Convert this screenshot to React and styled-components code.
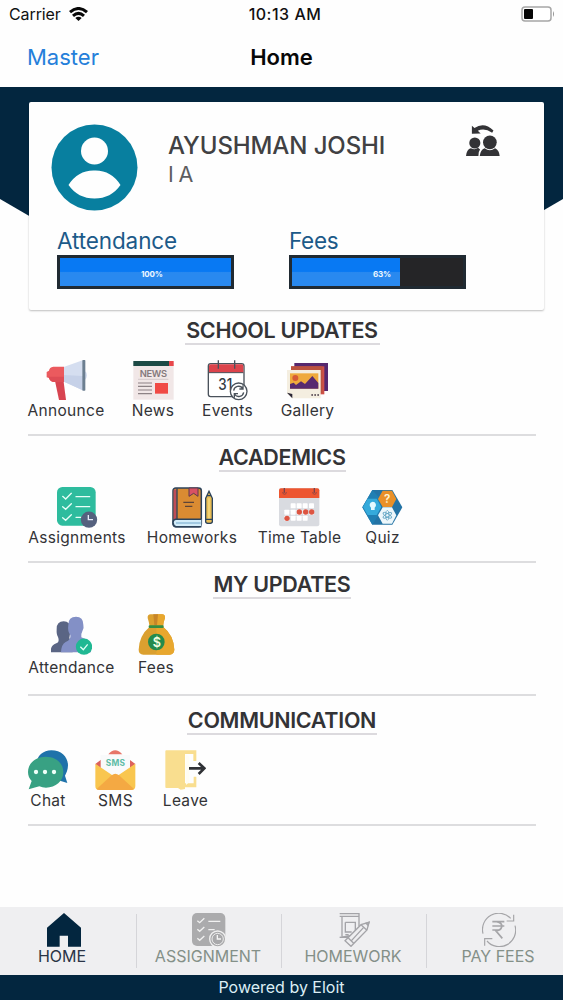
import styled, { createGlobalStyle } from "styled-components";

const GlobalStyle = createGlobalStyle`
	* {
		box-sizing: border-box;
	}
	body {
		margin: 0;
		background-color: #fefefe;
		font-family: Inter, "Liberation Sans", sans-serif;
		color: #333336;
	}
`;

const AnnounceIcon = () => (
	<Icon viewBox="0 0 123 123">
		<path d="M51 22 L110 1 V91 L51 64Z" fill="#d5def0" />
		<path d="M51 45 L110 48 V91 L51 64Z" fill="#c6d1e8" />
		<path d="M117 34 q6 3 6 12 t-6 13z" fill="#d5def0" />
		<rect x="109" y="0" width="9" height="92" rx="2" fill="#6c7f91" />
		<path d="M26 58 H52 L60 120 H39Z" fill="#d84450" />
		<path d="M54 20 H22 Q10 21 9 32 L2 36 V52 L9 54 Q11 65 24 66 H54Z" fill="#eb5a5e" />
		<path d="M54 50 H8 Q11 65 24 66 H54Z" fill="#de4c55" />
	</Icon>
);

const NewsIcon = () => (
	<Icon viewBox="0 0 123 123">
		<rect x="1" y="8" width="121" height="111" fill="#f1e7e7" />
		<rect x="1" y="3" width="107" height="15" fill="#1c4a45" />
		<rect x="108" y="3" width="14" height="15" fill="#e8474b" />
		<text x="20" y="50" fontSize="28" fontWeight="600" textLength="82" fill="#85797c">
			NEWS
		</text>
		<path d="M15 58 H106" stroke="#c4b9bb" strokeWidth="2" />
		<path d="M15 69 H57 M15 79 H57 M15 90 H57 M15 101 H57" stroke="#8d8285" strokeWidth="3.5" />
		<rect x="66" y="69" width="39" height="32" fill="#f04a45" />
	</Icon>
);

const EventsIcon = () => (
	<Icon viewBox="0 0 123 123">
		<rect x="4" y="11" width="107" height="99" rx="7" fill="#fff" stroke="#4a525b" strokeWidth="4" />
		<path d="M6 38 V18 Q6 13 11 13 H104 Q109 13 109 18 V38Z" fill="#dc444c" />
		<path d="M6 38 H109" stroke="#4a525b" strokeWidth="3" />
		<path d="M34 1 V26 M83 1 V26" stroke="#4a525b" strokeWidth="4" />
		<text x="34" y="89" fontSize="47" fontWeight="500" textLength="42" lengthAdjust="spacingAndGlyphs" fill="#343c44">
			31
		</text>
		<circle cx="95" cy="94" r="25" fill="#fff" stroke="#4a525b" strokeWidth="4" />
		<path
			d="M80 92 A15 15 0 0 1 107 85 M110 97 A15 15 0 0 1 83 103 M108 76 V87 H97 M82 113 V101 H93"
			fill="none"
			stroke="#4a525b"
			strokeWidth="4"
		/>
	</Icon>
);

const GalleryIcon = () => (
	<Icon viewBox="0 0 123 123">
		<rect x="22" y="9" width="101" height="84" fill="#56286e" />
		<rect x="12" y="19" width="100" height="84" fill="#cf5149" />
		<rect x="12" y="19" width="94" height="80" fill="#bb523e" />
		<path d="M0 30 H101 V115 H15 L0 100Z" fill="#f4eee0" />
		<rect x="9" y="40" width="85" height="46" fill="#efaa3d" />
		<circle cx="25" cy="54" r="9" fill="#d65b35" />
		<path d="M9 86 V72 L20 68 L27 75 L42 64 L54 72 L76 48 L94 69 V86Z" fill="#572a70" />
		<path d="M0 98 L16 102 V115Z" fill="#2b2635" />
		<path d="M73 105 H97" stroke="#473a45" strokeWidth="5" strokeDasharray="5 4" />
	</Icon>
);

const AssignmentsIcon = () => (
	<Icon viewBox="0 0 123 123">
		<rect x="0" y="0" width="116" height="116" rx="16" fill="#2ebc9e" />
		<path
			d="M17 28 L26 36 L43 19 M17 59 L26 67 L43 50 M17 92 L26 100 L43 83 M57 29 H98 M57 59 H98 M57 91 H73"
			fill="none"
			stroke="#e8fff8"
			strokeWidth="4"
			strokeLinecap="round"
		/>
		<circle cx="96" cy="98" r="24.500" fill="#55617e" />
		<path d="M94 84 V98 H108" fill="none" stroke="#e8ecfa" strokeWidth="4" />
	</Icon>
);

const HomeworksIcon = () => (
	<Icon viewBox="0 0 123 123">
		<rect x="3" y="3" width="85" height="116" rx="8" fill="#da8b32" stroke="#2c435b" strokeWidth="4.500" />
		<path d="M5 8 H14 V98 H5Z" fill="#bf4c58" />
		<path d="M15 4 V98" stroke="#2c435b" strokeWidth="4" />
		<path d="M88 97 H11 Q3 98 3 107 Q4 118 12 119 H88" fill="#d3edfa" stroke="#2c435b" strokeWidth="4.500" />
		<path d="M12 108 H86" stroke="#71a6ca" strokeWidth="3" />
		<path d="M51 3 H78 V28 L65 19 L51 28Z" fill="#d95264" stroke="#5d3b4c" strokeWidth="3" />
		<path d="M34 46 H66 M39 58 H61" stroke="#5d4438" strokeWidth="4" />
		<path d="M101 34 L111 13 L121 34 V104 Q121 109 111 109 Q101 109 101 104Z" fill="#e8bd55" stroke="#2c435b" strokeWidth="4" />
		<path d="M111 34 V96" stroke="#f7db83" strokeWidth="4" />
		<path d="M102 97 H120 M105 26 H117" stroke="#2c435b" strokeWidth="4" />
	</Icon>
);

const tableCells = [
	[35, 49], [53, 49], [71, 49], [90, 49],
	[16, 68], [35, 68], [53, 68], [71, 68], [90, 68],
	[16, 86], [35, 86], [53, 86], [71, 86],
];
const tableMarks = [[61, 75], [80, 75], [98, 75], [24, 94]];

const TimeTableIcon = () => (
	<Icon viewBox="0 0 123 123">
		<rect x="0" y="4" width="121" height="114" rx="6" fill="#d9dbe0" />
		<path d="M0 33 V10 Q0 4 6 4 H115 Q121 4 121 10 V33Z" fill="#ed5530" />
		<path d="M16 3 V17 M106 3 V17" fill="none" stroke="#79424a" strokeWidth="4" />
		<path d="M11 15 Q11 22 17 22 Q22 22 22 15 M101 15 Q101 22 107 22 Q112 22 112 15" fill="none" stroke="#9b4740" strokeWidth="3" />
		{tableCells.map(([x, y]) => (
			<rect key={`${x}-${y}`} x={x} y={y} width="15" height="15" rx="2" fill="#fff" />
		))}
		{tableMarks.map(([cx, cy]) => (
			<circle key={`${cx}-${cy}`} cx={cx} cy={cy} r="8" fill="#dd5542" />
		))}
	</Icon>
);

const QuizIcon = () => (
	<Icon viewBox="0 0 123 123">
		<path d="M1 61 L31 9 H91 L121 61 L91 113 H31Z" fill="#2373a5" />
		<path d="M1 61 L31 9 L50 30 L57 60 L47 88 L31 113Z" fill="#207fb3" />
		<path d="M3 60 L17 35 H44 L58 60 L44 84 H17Z" fill="#35aadb" />
		<path d="M48 36 L62 11 H90 L103 36 L90 60 H62Z" fill="#e99028" />
		<path d="M48 85 L62 61 H90 L103 85 L90 110 H62Z" fill="#edf7fb" />
		<path d="M32 44 a10 10 0 0 1 6 18 v7 h-11 v-7 a10 10 0 0 1 5 -18z" fill="#e4f9ff" />
		<text x="66" y="48" fontSize="35" fontWeight="600" fill="#fff4d2">
			?
		</text>
		<g fill="none" stroke="#64a6c4" strokeWidth="2.500">
			<ellipse cx="76" cy="85" rx="5" ry="15" />
			<ellipse cx="76" cy="85" rx="5" ry="15" transform="rotate(60 76 85)" />
			<ellipse cx="76" cy="85" rx="5" ry="15" transform="rotate(120 76 85)" />
		</g>
	</Icon>
);

const AttendanceIcon = () => (
	<Icon viewBox="0 0 123 123">
		<path
			d="M17 45 Q17 22 38 22 Q58 22 59 45 L56 66 Q52 78 65 82 V115 H0 V104 Q2 94 16 88 Q27 84 21 69 Q16 62 17 45Z"
			fill="#5a6584"
		/>
		<path
			d="M52 32 Q52 8 75 8 Q97 8 97 32 Q100 44 94 52 Q89 61 91 70 Q118 77 120 115 H30 Q31 91 44 84 Q61 77 58 63 Q49 52 52 32Z"
			fill="#8390c6"
		/>
		<circle cx="99" cy="98" r="24.500" fill="#20b893" />
		<path d="M88 98 L97 107 L110 91" fill="none" stroke="#e0fff6" strokeWidth="4" />
	</Icon>
);

const MoneyIcon = () => (
	<Icon viewBox="0 0 123 123">
		<path
			d="M41 38 Q39 24 35 12 Q34 1 44 1 H78 Q88 1 87 12 Q82 24 81 38 Q113 63 115 107 Q114 121 101 122 H22 Q8 121 8 107 Q9 65 41 38Z"
			fill="#dba02f"
		/>
		<path d="M61 1 H78 Q88 1 87 12 Q82 24 81 38 Q113 63 115 107 Q114 121 101 122 H61Z" fill="#e8a72e" />
		<path d="M52 1 H66 L63 34 H55Z" fill="#c78528" />
		<rect x="38" y="34" width="45" height="8" rx="3" fill="#368e43" />
		<circle cx="61" cy="84" r="25" fill="#248b4c" />
		<text x="50" y="98" fontSize="38" fontWeight="600" textLength="22" fill="#f2ffe0">
			$
		</text>
	</Icon>
);

const ChatIcon = () => (
	<Icon viewBox="0 0 123 123">
		<path
			d="M70 1 C101 1 120 22 120 46 C120 60 114 71 111 77 L118 99 L96 92 C58 104 25 78 25 44 C25 19 45 1 70 1Z"
			fill="#1f72aa"
		/>
		<path
			d="M53 20 C84 20 106 39 106 67 C106 94 83 113 54 113 Q43 113 34 109 L2 118 L11 93 C4 86 0 77 0 66 C0 39 24 20 53 20Z"
			fill="#38a183"
		/>
		<g fill="#f0fff9">
			<circle cx="24" cy="66" r="6.500" />
			<circle cx="51" cy="66" r="6.500" />
			<circle cx="78" cy="66" r="6.500" />
		</g>
	</Icon>
);

const SmsIcon = () => (
	<Icon viewBox="0 0 123 123">
		<path d="M40 13 Q60 -12 82 13Z" fill="#e77569" />
		<path d="M1 42 L18 29 V56Z M121 42 L104 29 V56Z" fill="#dc625c" />
		<path d="M17 15 H105 V80 H17Z" fill="#f9fafb" />
		<text x="32" y="48" fontSize="25" fontWeight="700" textLength="58" fill="#5ebca6">
			SMS
		</text>
		<path d="M1 41 L61 82 L121 41 V108 Q121 120 109 120 H13 Q1 120 1 108Z" fill="#f9c64f" />
		<path d="M5 117 L50 76 Q61 67 72 76 L117 117 Q114 120 108 120 H14 Q7 120 5 117Z" fill="#f4a943" />
	</Icon>
);

const LeaveIcon = () => (
	<Icon viewBox="0 0 123 123">
		<path d="M4 1 H94 V33 H85 V12 H60 V100 H86 V80 H94 V112 H60 V117 L47 119 L39 114 H4Q1 114 1 111 V4Q1 1 4 1Z" fill="#f9de8f" />
		<path d="M61 13 L73 20 V96 L63 105Z" fill="#fffdf3" />
		<path d="M72 55 H116 M101 39 L118 55 L101 72" fill="none" stroke="#303236" strokeWidth="8" />
	</Icon>
);

const AvatarIcon = () => (
	<Avatar viewBox="0 0 87 87">
		<circle cx="43.500" cy="43.500" r="43" fill="#087f9f" />
		<circle cx="43.500" cy="27" r="13.500" fill="#fefefe" />
		<path d="M17.500 61 Q27 46 43.500 46.500 Q60 46 69.500 61 Q60 74.500 43.500 74.500 Q27 74.500 17.500 61Z" fill="#fefefe" />
	</Avatar>
);

const SwitchUserIcon = () => (
	<SwitchUser viewBox="0 0 104 96" fill="#333336">
		<path d="M18 1 L26 8 Q56 -11 84 16 L80 23 Q56 6 36 17 L45 25 L18 26Z" />
		<circle cx="27" cy="54" r="17" />
		<path d="M0 94 Q2 73 15 70 Q27 77 37 69 L43 74 Q37 81 38 94Z" />
		<circle cx="73" cy="52" r="21" />
		<path d="M42 94 Q44 75 57 70 Q73 82 89 70 Q102 76 103 94Z" />
	</SwitchUser>
);

const HomeTabIcon = () => (
	<TabIcon viewBox="0 0 102 102" fill="#03263f">
		<path d="M51 0 L102 44 V101 H63 V68 H38 V101 H0 V44Z" />
	</TabIcon>
);

const AssignmentTabIcon = () => (
	<TabIcon viewBox="0 0 102 102" fill="none">
		<rect width="100" height="99" rx="15" fill="#ababad" />
		<path
			d="M16 23 L23 29 L37 16 M16 49 L23 55 L37 42 M16 76 L23 82 L37 69 M49 25 H85 M49 50 H68"
			stroke="#f1f1f1"
			strokeWidth="4"
		/>
		<circle cx="77" cy="78" r="24" fill="#a8a8aa" stroke="#f0f0f0" strokeWidth="4" />
		<circle cx="77" cy="78" r="17" stroke="#ececec" strokeWidth="3" />
		<path d="M76 66 V78 H87" stroke="#f5f5f5" strokeWidth="4" />
	</TabIcon>
);

const HomeworkTabIcon = () => (
	<TabIcon viewBox="0 0 102 102" fill="none" stroke="#a4a4a8" strokeWidth="4">
		<path d="M8 2 H66 V39 M66 64 V73 H8Z M8 10 H66 M15 12 V70 M25 28 H55 V52 M25 28 V57 H44 M25 65 H35" />
		<path d="M96 28 L90 51 L42 100 L24 83 L72 35Z M72 35 L89 51" fill="#efeff1" />
		<path d="M96 28 L87 31 L93 37Z M34 75 L50 91 M80 43 L44 82" />
	</TabIcon>
);

const PayTabIcon = () => (
	<TabIcon viewBox="0 0 102 102" fill="none" stroke="#a5a5a8" strokeWidth="3.500">
		<path d="M3 62 A49 49 0 0 1 86 16 M99 38 A49 49 0 0 1 15 84 M95 5 V24 H74 M8 98 V77 H31" />
		<path d="M31 26 H67 M31 39 H67 M31 51 H53 M44 26 Q62 30 59 42 Q56 53 41 53 L61 76" strokeWidth="5" />
	</TabIcon>
);

const sections = [
	{
		title: "SCHOOL UPDATES", height: 125, top: 6, gap: 28, titleWidth: 195,
		items: [
			{ label: "Announce", width: 76, icon: <AnnounceIcon /> },
			{ label: "News", width: 42, icon: <NewsIcon /> },
			{ label: "Events", width: 51, icon: <EventsIcon /> },
			{ label: "Gallery", width: 53, icon: <GalleryIcon /> },
		],
	},
	{
		title: "ACADEMICS", height: 127, top: 8, gap: 21, titleWidth: 127,
		items: [
			{ label: "Assignments", width: 98, icon: <AssignmentsIcon /> },
			{ label: "Homeworks", width: 90, icon: <HomeworksIcon /> },
			{ label: "Time Table", width: 83, icon: <TimeTableIcon /> },
			{ label: "Quiz", width: 41, icon: <QuizIcon /> },
		],
	},
	{
		title: "MY UPDATES", height: 133, top: 8, gap: 22, titleWidth: 138, labelTop: 3,
		items: [
			{ label: "Attendance", width: 87, icon: <AttendanceIcon /> },
			{ label: "Fees", width: 38, icon: <MoneyIcon /> },
		],
	},
	{
		title: "COMMUNICATION", height: 130, top: 11, gap: 26, titleWidth: 190,
		items: [
			{ label: "Chat", width: 40, icon: <ChatIcon /> },
			{ label: "SMS", width: 43, icon: <SmsIcon /> },
			{ label: "Leave", width: 45, icon: <LeaveIcon /> },
		],
	},
];

const tabs = [
	{ label: "HOME", icon: <HomeTabIcon />, active: true },
	{ label: "ASSIGNMENT", icon: <AssignmentTabIcon /> },
	{ label: "HOMEWORK", icon: <HomeworkTabIcon /> },
	{ label: "PAY FEES", icon: <PayTabIcon /> },
];

const App = () => {
	return (
		<Page>
			<GlobalStyle />
			<StatusBar>
				<Carrier>
					Carrier
					<Wifi viewBox="0 0 19 14" fill="none" stroke="#080808" strokeWidth="3">
						<path d="M1 5.200 Q9.500 -2.200 18 5.200 M4 8.800 Q9.500 4 15 8.800" />
						<path d="M6.300 11 Q9.500 8.300 12.700 11 L9.500 14Z" fill="#080808" stroke="none" />
					</Wifi>
				</Carrier>
				<Clock>10:13 AM</Clock>
				<Battery viewBox="0 0 34 16">
					<rect x="1" y="1" width="29" height="14" rx="3" fill="#fff" stroke="#a7a7a7" strokeWidth="1.500" />
					<rect x="3" y="3" width="9" height="10" rx="1" fill="#050505" />
					<path d="M32 5 Q34 8 32 11Z" fill="#929292" />
				</Battery>
			</StatusBar>
			<NavBar>
				<BackLink>Master</BackLink>
				<NavTitle>Home</NavTitle>
			</NavBar>
			<Hero>
				<Card>
					<Profile>
						<AvatarIcon />
						<NameBox>
							<Name>AYUSHMAN JOSHI</Name>
							<ClassName>I A</ClassName>
						</NameBox>
						<SwitchUserIcon />
					</Profile>
					<Meters>
						<Meter>
							<MeterLabel $spacing="-0.1px">Attendance</MeterLabel>
							<Track>
								<Fill style={{ width: "100%" }}>
									<Percent>100%</Percent>
								</Fill>
							</Track>
						</Meter>
						<Meter>
							<MeterLabel $spacing="-0.3px">Fees</MeterLabel>
							<Track>
								<Fill style={{ width: "63%" }}>
									<Percent>63%</Percent>
								</Fill>
							</Track>
						</Meter>
					</Meters>
				</Card>
			</Hero>
			{sections.map((section) => (
				<Section key={section.title} $height={section.height} $top={section.top}>
					<SectionTitle $width={section.titleWidth}>{section.title}</SectionTitle>
					<Tiles $gap={section.gap}>
						{section.items.map((item) => (
							<Tile key={item.label} $width={item.width}>
								{item.icon}
								<TileLabel $top={section.labelTop}>{item.label}</TileLabel>
							</Tile>
						))}
					</Tiles>
				</Section>
			))}
			<TabBar>
				{tabs.map((tab) => (
					<Tab key={tab.label} $active={tab.active}>
						{tab.icon}
						<TabLabel $active={tab.active}>{tab.label}</TabLabel>
					</Tab>
				))}
			</TabBar>
			<Footer>Powered by Eloit</Footer>
		</Page>
	);
};

export default App;

const Page = styled.div`
	display: flex;
	flex-direction: column;
	width: 563px;
	height: 1000px;
	overflow: hidden;
`;

const StatusBar = styled.header`
	display: grid;
	grid-template-columns: 1fr auto 1fr;
	align-items: center;
	height: 28px;
	padding: 0 8px 0 9px;
	color: #111;
`;

const Carrier = styled.div`
	display: flex;
	align-items: center;
	gap: 8px;
	font-size: 16px;
	letter-spacing: -0.1px;
`;

const Wifi = styled.svg`
	width: 19px;
	height: 14px;
`;

const Clock = styled.div`
	margin-left: 6px;
	font-size: 16px;
	font-weight: 500;
	letter-spacing: 0.5px;
	white-space: nowrap;
`;

const Battery = styled.svg`
	justify-self: end;
	width: 34px;
	height: 16px;
`;

const NavBar = styled.nav`
	display: grid;
	grid-template-columns: 1fr auto 1fr;
	align-items: center;
	height: 59px;
	padding: 0 28px 2px;
	font-size: 22px;
`;

const BackLink = styled.span`
	margin-left: -1px;
	color: #257fda;
`;

const NavTitle = styled.h1`
	margin: 0;
	color: #080808;
	font-size: 22px;
	font-weight: 600;
`;

const Hero = styled.section`
	position: relative;
	flex-shrink: 0;
	height: 224px;
	padding: 15px 19px 0 29px;

	&::before {
		content: "";
		position: absolute;
		z-index: -1;
		inset: 0;
		background-color: #03263f;
		clip-path: polygon(0 0, 100% 0, 100% 112px, 403px 205px, 160px 205px, 0 112px);
	}
`;

const Card = styled.article`
	height: 208px;
	padding: 22px 28px 0 22px;
	background-color: #fefefe;
	border-radius: 2px;
	box-shadow: 0 1px 2px rgba(0, 0, 0, 0.25);
`;

const Profile = styled.div`
	display: flex;
	align-items: flex-start;
	height: 103px;
`;

const Avatar = styled.svg`
	width: 87px;
	height: 87px;
`;

const NameBox = styled.div`
	width: 298px;
	margin-left: 30px;
	padding-top: 7px;
`;

const Name = styled.div`
	color: #414143;
	font-size: 24px;
	line-height: 30px;
	font-weight: 500;
	letter-spacing: -0.1px;
	white-space: nowrap;
`;

const ClassName = styled.div`
	color: #5d5d5f;
	font-size: 21.5px;
	line-height: 26px;
	letter-spacing: -0.6px;
`;

const SwitchUser = styled.svg`
	flex-shrink: 0;
	width: 34px;
	height: 32px;
	margin-top: 1px;
`;

const Meters = styled.div`
	display: flex;
	gap: 55px;
	padding-left: 6px;
`;

const Meter = styled.div`
	width: 177px;
`;

const MeterLabel = styled.div`
	height: 28px;
	color: #1c5a89;
	font-size: 22.5px;
	line-height: 28px;
	letter-spacing: ${({ $spacing }) => $spacing};
`;

const Track = styled.div`
	height: 34px;
	border: 3px solid #202a32;
	background-color: #252527;
`;

const Fill = styled.div`
	display: flex;
	align-items: center;
	height: 28px;
	background: linear-gradient(#0879f3 0 48%, #2989ef 52%);
`;

const Percent = styled.span`
	padding-left: 81px;
	padding-top: 3px;
	color: #eef8ff;
	font-size: 8px;
	line-height: 10px;
	font-weight: 700;
	letter-spacing: -0.2px;
`;

const Section = styled.section`
	flex-shrink: 0;
	height: ${({ $height }) => $height}px;
	margin: 0 27px 0 28px;
	padding-top: ${({ $top }) => $top}px;
	border-bottom: 2px solid #dddddf;
`;

const SectionTitle = styled.h2`
	display: flex;
	justify-content: center;
	width: ${({ $width }) => $width}px;
	height: 28px;
	margin: 0 auto 15px;
	border-bottom: 2px solid #dcdade;
	font-size: 21.5px;
	line-height: 26px;
	font-weight: 600;
	letter-spacing: -0.3px;
	white-space: nowrap;
`;

const Tiles = styled.div`
	display: flex;
	gap: ${({ $gap }) => $gap}px;
`;

const Tile = styled.div`
	display: flex;
	flex-direction: column;
	align-items: center;
	width: ${({ $width }) => $width}px;
`;

const Icon = styled.svg`
	flex-shrink: 0;
	width: 41px;
	height: 41px;
	font-family: Inter, sans-serif;
`;

const TileLabel = styled.span`
	margin-top: ${({ $top }) => $top || 0}px;
	font-size: 15.5px;
	line-height: 20px;
	letter-spacing: 0.3px;
	white-space: nowrap;
`;

const TabBar = styled.nav`
	display: grid;
	grid-template-columns: repeat(4, 145px);
	flex-shrink: 0;
	height: 68px;
	margin: auto -9px 0 -8px;
	padding-top: 7px;
	background-color: #efeff1;
`;

const Tab = styled.div`
	display: flex;
	flex-direction: column;
	align-items: center;
	height: 54px;
	border-right: 1px solid #d5d5d9;
`;

const TabIcon = styled.svg`
	flex-shrink: 0;
	width: 34px;
	height: 34px;
	margin-top: -1px;
`;

const TabLabel = styled.span`
	margin-right: ${({ $active }) => ($active ? 4 : 2)}px;
	color: ${({ $active }) => ($active ? "#293446" : "#849088")};
	font-size: 16px;
	line-height: 19px;
	white-space: nowrap;
`;

const Footer = styled.footer`
	flex-shrink: 0;
	height: 25px;
	background-color: #03263f;
	color: #dceef5;
	font-size: 16px;
	line-height: 25px;
	text-align: center;
`;
